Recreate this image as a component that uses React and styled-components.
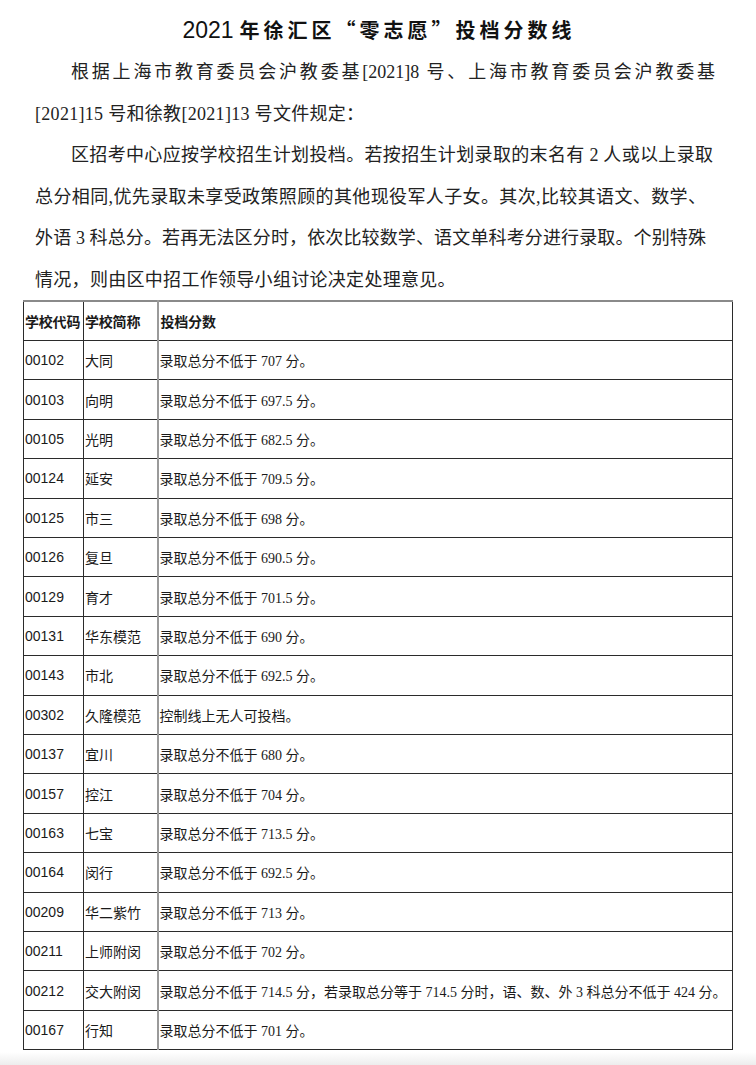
import React from "react";
import styled, { createGlobalStyle } from "styled-components";

const Global = createGlobalStyle`
  html, body { margin: 0; padding: 0; background: #fff; }
  body { width: 756px; height: 1065px; overflow: hidden; color: #1e1e1e; }
`;

const Page = styled.div`
  width: 756px;
  height: 1065px;
  display: flex;
  flex-direction: column;
  box-sizing: border-box;
  padding-top: 9px;
`;

const Title = styled.h1`
  margin: 0;
  height: 42px;
  line-height: 42px;
  text-align: center;
  font-family: "Noto Sans CJK SC", sans-serif;
  font-weight: 700;
  font-size: 20px;
  letter-spacing: 4px;
  color: #111;
  padding-left: 2px;
`;

const Digits = styled.span`
  font-family: "Liberation Sans", "Noto Sans CJK SC", sans-serif;
  font-weight: 400;
  font-size: 23px;
  letter-spacing: 0;
  margin-right: 6px;
`;

const Body = styled.div`
  padding: 1px 0 0 35px;
  font-family: "Liberation Serif", "Noto Sans CJK SC", serif;
  font-size: 18px;
  letter-spacing: 0.3px;
  line-height: 41.6px;
  color: #222;
`;

const Para = styled.div`
  display: flex;
  flex-direction: column;
`;

const Line = styled.div`
  width: ${(p) => p.$w}px;
  white-space: nowrap;
  letter-spacing: ${(p) => (p.$justify ? "0" : "0.3px")};
  text-indent: ${(p) => (p.$indent ? "2em" : "0")};
  text-align: ${(p) => (p.$justify ? "justify" : "left")};
  text-align-last: ${(p) => (p.$justify ? "justify" : "left")};
`;

const Table = styled.table`
  margin: -2px 0 0 23px;
  width: 709px;
  border-collapse: collapse;
  table-layout: fixed;
  color: #1a1a1a;
`;

const Row = styled.tr`
  height: ${(p) => (p.$head ? "40px" : "39.4px")};
`;

const Cell = styled.td`
  border: 1px solid #2b2b2b;
  border-top: ${(p) => (p.$first ? "2px solid #8a8a8a" : "1px solid #2b2b2b")};
  ${(p) => (p.$divider ? "border-right: 2px solid #9a9a9a;" : "")}
  padding: 0 0 0 ${(p) => p.$pad || 1}px;
  vertical-align: middle;
  font-size: 14px;
  white-space: nowrap;
  overflow: visible;
  font-family: ${(p) =>
    p.$kind === "code"
      ? '"Liberation Sans", Arial, sans-serif'
      : p.$kind === "head"
      ? '"Noto Sans CJK SC", sans-serif'
      : '"Liberation Serif", "Noto Sans CJK SC", serif'};
  font-weight: ${(p) => (p.$kind === "head" ? 700 : 400)};
  letter-spacing: ${(p) => (p.$kind === "head" ? "-0.2px" : "0")};
`;

const Col = styled.col`
  width: ${(p) => p.$w}px;
`;

const Bottom = styled.div`
  flex: 1;
  margin-top: 2px;
  background: linear-gradient(#ffffff, #ededed);
`;

const rows = [
  ["00102", "大同", "录取总分不低于 707 分。"],
  ["00103", "向明", "录取总分不低于 697.5 分。"],
  ["00105", "光明", "录取总分不低于 682.5 分。"],
  ["00124", "延安", "录取总分不低于 709.5 分。"],
  ["00125", "市三", "录取总分不低于 698 分。"],
  ["00126", "复旦", "录取总分不低于 690.5 分。"],
  ["00129", "育才", "录取总分不低于 701.5 分。"],
  ["00131", "华东模范", "录取总分不低于 690 分。"],
  ["00143", "市北", "录取总分不低于 692.5 分。"],
  ["00302", "久隆模范", "控制线上无人可投档。"],
  ["00137", "宜川", "录取总分不低于 680 分。"],
  ["00157", "控江", "录取总分不低于 704 分。"],
  ["00163", "七宝", "录取总分不低于 713.5 分。"],
  ["00164", "闵行", "录取总分不低于 692.5 分。"],
  ["00209", "华二紫竹", "录取总分不低于 713 分。"],
  ["00211", "上师附闵", "录取总分不低于 702 分。"],
  [
    "00212",
    "交大附闵",
    "录取总分不低于 714.5 分，若录取总分等于 714.5 分时，语、数、外 3 科总分不低于 424 分。",
  ],
  ["00167", "行知", "录取总分不低于 701 分。"],
];

export default function App() {
  return (
    <Page>
      <Global />
      <Title>
        <Digits>2021</Digits>年徐汇区“零志愿”投档分数线
      </Title>
      <Body>
        <Para>
          <Line $w={680} $indent $justify>
            根据上海市教育委员会沪教委基[2021]8 号、上海市教育委员会沪教委基
          </Line>
          <Line $w={680}>[2021]15 号和徐教[2021]13 号文件规定：</Line>
        </Para>
        <Para>
          <Line $w={678} $indent $justify>
            区招考中心应按学校招生计划投档。若按招生计划录取的末名有 2 人或以上录取
          </Line>
          <Line $w={671} $justify>
            总分相同,优先录取未享受政策照顾的其他现役军人子女。其次,比较其语文、数学、
          </Line>
          <Line $w={671} $justify>
            外语 3 科总分。若再无法区分时，依次比较数学、语文单科考分进行录取。个别特殊
          </Line>
          <Line $w={680}>情况，则由区中招工作领导小组讨论决定处理意见。</Line>
        </Para>
      </Body>
      <Table>
        <colgroup>
          <Col $w={60} />
          <Col $w={74} />
          <Col $w={575} />
        </colgroup>
        <tbody>
          <Row $head>
            <Cell $kind="head" $first>学校代码</Cell>
            <Cell $kind="head" $first $divider>学校简称</Cell>
            <Cell $kind="head" $first $pad={2}>投档分数</Cell>
          </Row>
          {rows.map(([code, name, score]) => (
            <Row key={code}>
              <Cell $kind="code">{code}</Cell>
              <Cell $kind="text" $divider>{name}</Cell>
              <Cell $kind="text">{score}</Cell>
            </Row>
          ))}
        </tbody>
      </Table>
      <Bottom />
    </Page>
  );
}
